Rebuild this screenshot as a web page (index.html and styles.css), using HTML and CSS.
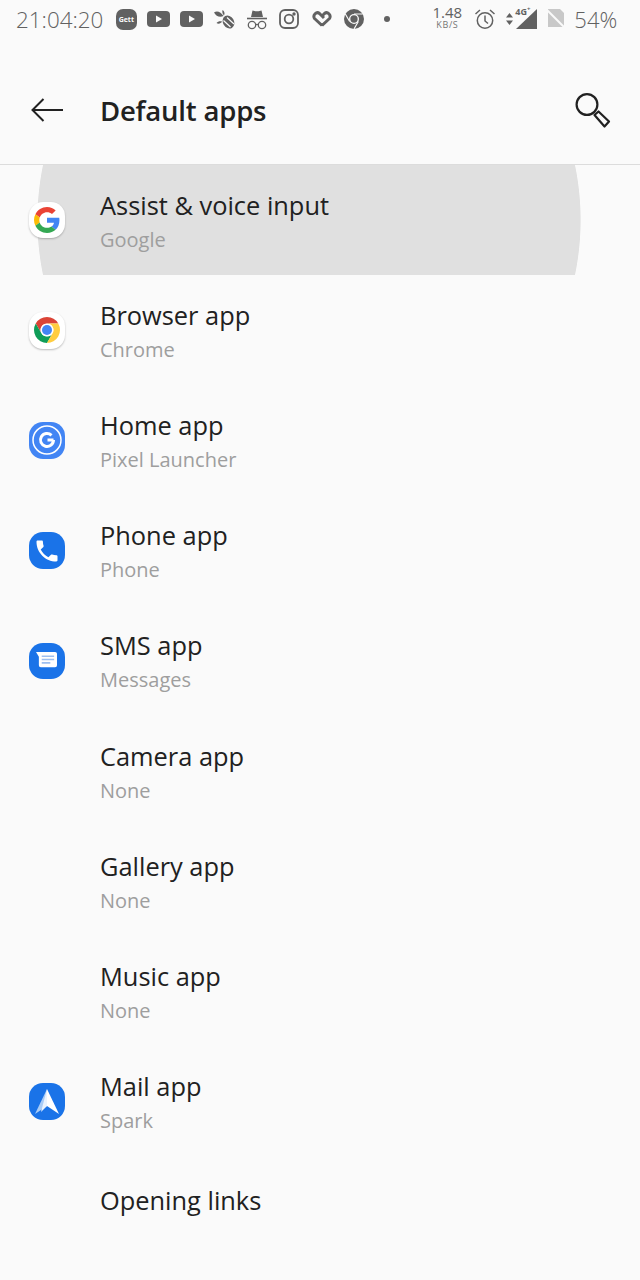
FILE: index.html
```html
<!doctype html>
<html>
<head>
<meta charset="utf-8">
<title>Default apps</title>
<link rel="stylesheet" href="styles.css">
</head>
<body>
<div class="status">
	<span class="clock">21:04:20</span>
	<div class="notifs">
		<span class="gett">Gett</span>
		<svg width="23" height="16" viewBox="0 0 23 16"><rect width="23" height="16" rx="4" fill="#616161"/><path d="M9 4.500l6 3.500-6 3.500z" fill="#fafafa"/></svg>
		<svg width="23" height="16" viewBox="0 0 23 16"><rect width="23" height="16" rx="4" fill="#616161"/><path d="M9 4.500l6 3.500-6 3.500z" fill="#fafafa"/></svg>
		<svg width="21" height="19" viewBox="0 0 21 19" fill="#616161"><path d="M0 2.500C3 0 7 2 9.500 6 6 7.500 2 6.500 0 2.500z"/><path d="M8.500 0c2 1 2.500 3.500 1.500 5.500C8.500 4 8 2 8.500 0z"/><path d="M2.500 13c1.500-1.800 3.500-2 5.500-1.500-1 2-3.500 3-5.500 1.500z"/><ellipse cx="14.500" cy="12" rx="5.500" ry="6.800" transform="rotate(-30 14.500 12)"/><path d="M9.500 10.500l7 6.500M13 7.500l7 6.500" stroke="#fafafa" stroke-width="1.200"/></svg>
		<svg width="22" height="22" viewBox="0 0 22 22"><path d="M5 9l1.500-6.500 3 .8h3l3-.8L17 9z" fill="#616161"/><path d="M1 10.500h20" stroke="#616161" stroke-width="1.600"/><g fill="none" stroke="#616161" stroke-width="1.300"><circle cx="6" cy="17" r="3.700"/><circle cx="16" cy="17" r="3.700"/><path d="M9.700 16.500h2.600"/></g></svg>
		<svg width="20" height="20" viewBox="0 0 20 20" fill="none" stroke="#616161" stroke-width="1.800"><rect x="1" y="1" width="18" height="18" rx="5"/><circle cx="10" cy="10" r="4.300"/><circle cx="15" cy="5" r=".8" fill="#616161"/></svg>
		<svg width="20" height="18" viewBox="0 0 20 18" fill="none" stroke="#616161" stroke-width="3" stroke-linejoin="round"><path d="M10 15.500L2.500 8.500C0.500 5 4.500 1 7.500 3.500L12 8M10 15.500L17.500 8.500C19.500 5 15.500 1 12.500 3.500L9.500 6.500"/></svg>
		<svg width="20" height="20" viewBox="0 0 24 24"><circle cx="12" cy="12" r="12" fill="#616161"/><circle cx="12" cy="12" r="6" fill="#fafafa"/><circle cx="12" cy="12" r="4.400" fill="#616161"/><path d="M12 6H22.400M6.800 15L1.600 6M17.200 15L12 24" stroke="#fafafa" stroke-width="1.400"/></svg>
		<span class="dot"></span>
	</div>
	<div class="speed"><span class="speed-num">1.48</span><span class="speed-unit">KB/S</span></div>
	<svg class="alarm" width="22" height="22" viewBox="0 0 22 22" fill="none" stroke="#616161" stroke-width="1.500"><circle cx="11" cy="12.500" r="7.700"/><path d="M11 7.500v5.500l3 2.500M1.500 6L6 2M20.500 6L16 2"/></svg>
	<div class="signal">
		<svg width="9" height="14" viewBox="0 0 9 14"><path d="M4.500 1L8 5.500H1zM4.500 13L1 8.500h7z" fill="#616161"/></svg>
		<div class="bars"><span class="net">4G<sup>+</sup></span><svg width="22" height="20" viewBox="0 0 22 20"><path d="M21 0v20H0z" fill="#616161"/></svg></div>
	</div>
	<svg class="nosim" width="20" height="20" viewBox="0 0 20 20"><path d="M2 0h12l4 4v14H2z" fill="#c8c8c8"/><path d="M1 1l18 18" stroke="#fafafa" stroke-width="2"/></svg>
	<span class="battery">54%</span>
</div>

<div class="toolbar">
	<svg class="back" width="34" height="26" viewBox="0 0 34 26" fill="none" stroke="#212121" stroke-width="2"><path d="M33 13H3M13.500 2L2.500 13l11 11"/></svg>
	<h1 class="title">Default apps</h1>
	<svg class="search" width="36" height="37" viewBox="0 0 36 37" fill="none" stroke="#212121" stroke-width="2.200" stroke-linejoin="round"><circle cx="12" cy="12.500" r="10.400"/><path d="M19.500 23l4-3.500 10.500 10-4.500 5z"/></svg>
</div>

<ul class="list">
	<li class="row row-on">
		<span class="app app-white"><svg width="26" height="26" viewBox="0 0 48 48"><path fill="#ea4335" d="M24 9.500c3.500 0 6.700 1.200 9.200 3.600l6.800-6.800C35.900 2.400 30.500 0 24 0 14.600 0 6.500 5.400 2.600 13.200l8 6.200C12.400 13.700 17.700 9.500 24 9.500z"/><path fill="#4285f4" d="M47 24.500c0-1.600-.1-3.100-.4-4.500H24v9h12.900c-.6 3-2.200 5.500-4.800 7.200l7.700 6C44.400 37.900 47 31.800 47 24.500z"/><path fill="#fbbc05" d="M10.600 28.600c-.5-1.400-.8-3-.8-4.600s.3-3.200.8-4.600l-8-6.200C.9 16.500 0 20.100 0 24s.9 7.500 2.600 10.800z"/><path fill="#34a853" d="M24 48c6.500 0 11.900-2.100 15.900-5.800l-7.700-6c-2.200 1.400-4.900 2.300-8.200 2.300-6.300 0-11.600-4.200-13.400-10l-8 6.200C6.500 42.600 14.600 48 24 48z"/></svg></span>
		<div class="txt"><div class="name">Assist &amp; voice input</div><div class="sub">Google</div></div>
	</li>
	<li class="row">
		<span class="app app-white"><svg width="26" height="26" viewBox="0 0 24 24"><path fill="#db4437" d="M12 0A12 12 0 0 1 22.390 6H12A6 6 0 0 0 6.800 15L1.610 6A12 12 0 0 1 12 0z"/><path fill="#0f9d58" d="M1.610 6L6.800 15A6 6 0 0 0 17.200 15L12 24A12 12 0 0 1 1.610 6z"/><path fill="#ffcd40" d="M22.390 6A12 12 0 0 1 12 24L17.200 15A6 6 0 0 0 12 6z"/><circle cx="12" cy="12" r="5.800" fill="#fff"/><circle cx="12" cy="12" r="4.600" fill="#4285f4"/></svg></span>
		<div class="txt"><div class="name">Browser app</div><div class="sub">Chrome</div></div>
	</li>
	<li class="row">
		<span class="app app-pixel"><svg width="30" height="30" viewBox="0 0 30 30" fill="none" stroke="#fff"><circle cx="15" cy="15" r="14" stroke-width="1.500"/><path d="M21.500 15H15.500M21.500 15a6.500 6.500 0 1 1-2-4.700" stroke-width="3"/></svg></span>
		<div class="txt"><div class="name">Home app</div><div class="sub">Pixel Launcher</div></div>
	</li>
	<li class="row">
		<span class="app app-blue"><svg width="28" height="28" viewBox="0 0 24 24"><path fill="#fff" d="M6.600 10.800c1.400 2.800 3.800 5.100 6.600 6.600l2.200-2.200c.3-.3.700-.4 1-.2 1.100.4 2.300.6 3.600.6.600 0 1 .4 1 1V20c0 .6-.4 1-1 1C10.600 21 3 13.400 3 4c0-.6.400-1 1-1h3.500c.6 0 1 .4 1 1 0 1.300.2 2.500.6 3.600.1.300 0 .7-.2 1z"/></svg></span>
		<div class="txt"><div class="name">Phone app</div><div class="sub">Phone</div></div>
	</li>
	<li class="row">
		<span class="app app-blue"><svg width="23" height="21" viewBox="0 0 24 22"><path fill="#fff" d="M1 2h20a2 2 0 0 1 2 2v12a2 2 0 0 1-2 2H6a2 2 0 0 1-2-2V7z"/><path d="M7 6.500h13M7 10h13M7 13.500h9" stroke="#9dbff0" stroke-width="1.700"/></svg></span>
		<div class="txt"><div class="name">SMS app</div><div class="sub">Messages</div></div>
	</li>
	<li class="row">
		<span class="app"></span>
		<div class="txt"><div class="name">Camera app</div><div class="sub">None</div></div>
	</li>
	<li class="row">
		<span class="app"></span>
		<div class="txt"><div class="name">Gallery app</div><div class="sub">None</div></div>
	</li>
	<li class="row">
		<span class="app"></span>
		<div class="txt"><div class="name">Music app</div><div class="sub">None</div></div>
	</li>
	<li class="row">
		<span class="app app-blue"><svg width="26" height="28" viewBox="0 0 26 28"><path fill="#fff" d="M13 1L25 26 13 18z"/><path fill="#a9ccf7" d="M13 1L1 26 13 18z"/><path fill="#eaf3fe" d="M13 1L7 24 13 18z"/></svg></span>
		<div class="txt"><div class="name">Mail app</div><div class="sub">Spark</div></div>
	</li>
	<li class="row row-single">
		<span class="app"></span>
		<div class="txt"><div class="name">Opening links</div></div>
	</li>
</ul>
</body>
</html>
```

FILE: styles.css
```css
*{margin:0; padding:0; list-style:none; box-sizing:border-box;}
body{width:640px; height:1280px; overflow:hidden; background:#fafafa; font-family:"Open Sans","Noto Sans",sans-serif; color:#212121;}

.status{height:38px; display:flex; align-items:center; padding-left:16px; color:#616161;}
.clock{width:94px; font-size:22.400px; font-weight:300; white-space:nowrap;}
.notifs{display:grid; grid-template-columns:repeat(9,32.6px); align-items:center; justify-items:center;}
.gett{width:21px; height:21px; border-radius:7px; background:#616161; color:#fafafa; font-size:7px; font-weight:700; line-height:21px; text-align:center;}
.dot{width:6px; height:6px; border-radius:50%; background:#616161;}
.speed{width:42px; margin-left:23px; padding-bottom:4px; display:flex; flex-direction:column; align-items:center;}
.speed-num{font-size:15px; line-height:16px;}
.speed-unit{font-size:9px; line-height:10px; letter-spacing:.6px; color:#757575;}
.alarm{margin-left:6px;}
.signal{display:flex; align-items:center; gap:2px; margin-left:9px;}
.bars{position:relative; width:22px; height:20px;}
.net{position:absolute; left:-1px; top:-4px; font-size:9px; font-weight:700;}
.net sup{font-size:6px; vertical-align:top;}
.nosim{margin-left:8px;}
.battery{margin-left:8px; font-size:22px; font-weight:300;}

.toolbar{height:127px; display:flex; align-items:center; padding:18px 29px 0 30px; border-bottom:1px solid #dcdcdc;}
.back{flex:none;}
.title{flex:1; margin-left:36px; font-size:27.500px; font-weight:600; letter-spacing:-.2px;}
.search{flex:none;}

.row{height:110.200px; display:flex; align-items:center; padding-left:28.500px;}
.row-single{height:84px;}
.row-on{background:radial-gradient(circle 272px at 309px 55px,#e0e0e0 99.7%,transparent 100%);}
.app{width:36.500px; height:36.500px; flex:none; display:flex; align-items:center; justify-content:center; border-radius:14px;}
.app-white{background:#fff; box-shadow:0 1px 2px rgba(0,0,0,.25);}
.app-blue{background:#1a73e8;}
.app-pixel{background:#4285f4;}
.txt{margin-left:35px; padding-top:2px;}
.name{font-size:25.400px; line-height:34px; color:#212121; white-space:nowrap;}
.sub{margin-top:3px; font-size:20px; line-height:30px; color:#9e9e9e;}
```
